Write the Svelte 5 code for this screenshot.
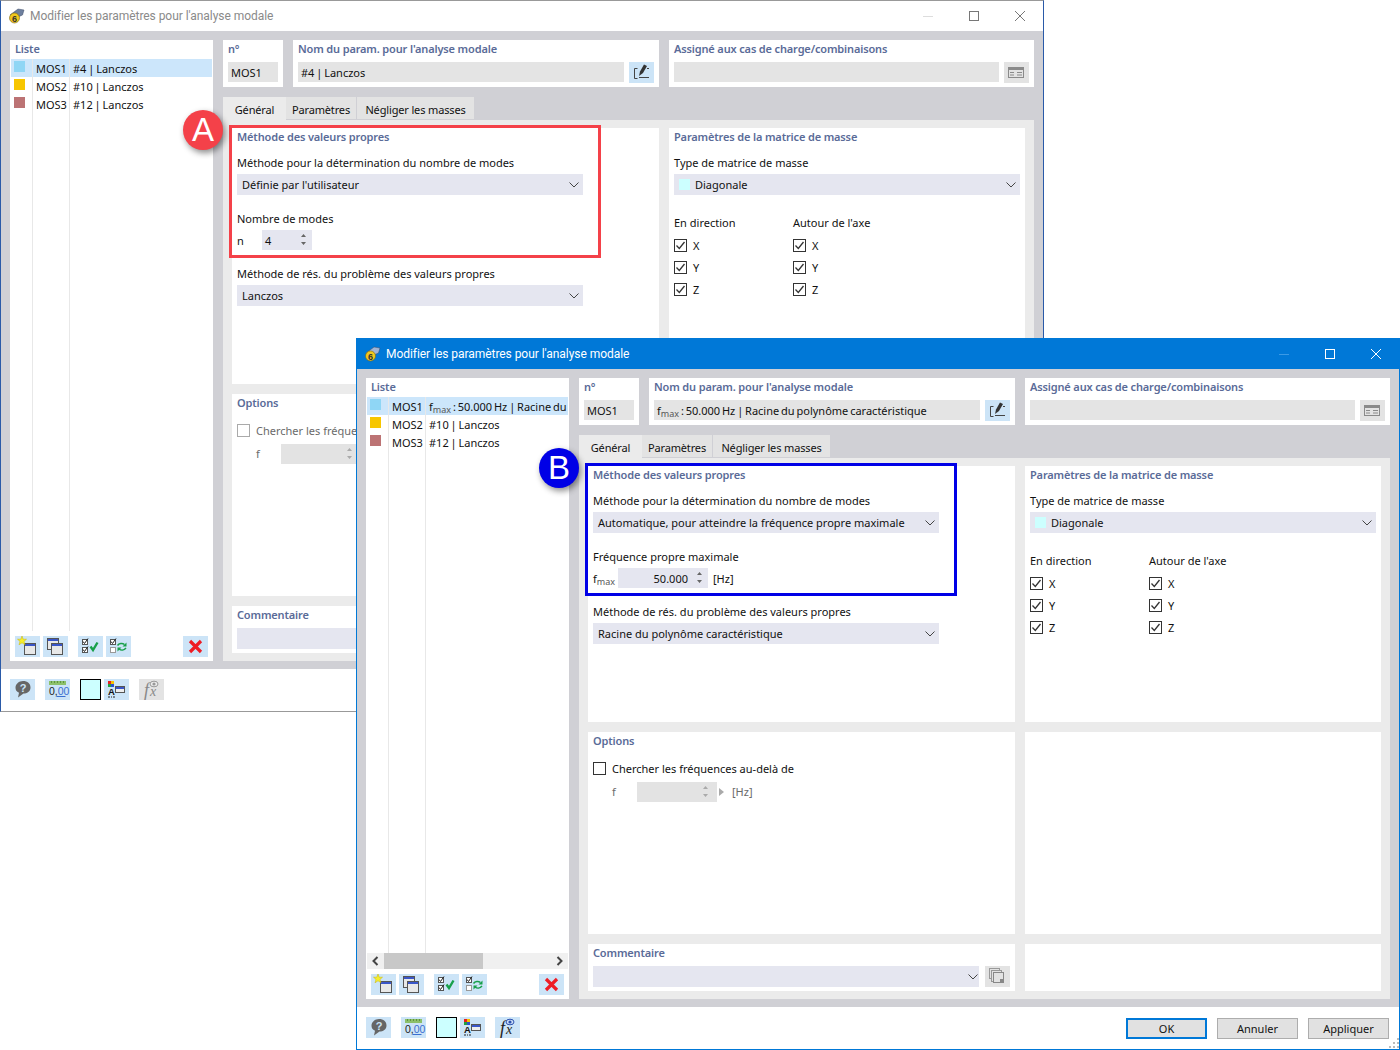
<script>
	// Two copies of the same dialog, the front one focused and in "fmax" mode.
	const swatches = ['#8fd6f5', '#f7c600', '#bc7374'];

	const dialogs = [
		{
			id: 'a',
			focused: false,
			rows: [
				{ name: 'MOS1', desc: '#4 | Lanczos' },
				{ name: 'MOS2', desc: '#10 | Lanczos' },
				{ name: 'MOS3', desc: '#12 | Lanczos' }
			],
			modeMethod: "Définie par l'utilisateur",
			solver: 'Lanczos'
		},
		{
			id: 'b',
			focused: true,
			rows: [
				{ name: 'MOS1', fmax: true, desc: ' : 50.000 Hz | Racine du polynôme caractéristique' },
				{ name: 'MOS2', desc: '#10 | Lanczos' },
				{ name: 'MOS3', desc: '#12 | Lanczos' }
			],
			modeMethod: 'Automatique, pour atteindre la fréquence propre maximale',
			solver: 'Racine du polynôme caractéristique'
		}
	];
</script>

{#snippet fmax()}<span class="fmax">f<sub>max</sub></span>{/snippet}

{#snippet chevron()}
	<svg class="chev" width="10" height="6" viewBox="0 0 10 6"><path d="M.5.5 5 5 9.5.5" fill="none" stroke="#444" /></svg>
{/snippet}

{#snippet spinner()}
	<svg class="spin" width="7" height="13" viewBox="0 0 7 13"><path d="M3.5 1 6 4H1zM3.5 12 1 9h5z" fill="#666" /></svg>
{/snippet}

{#snippet check(label, on = true, dim = false)}
	<span class="check" class:dim>
		<svg width="13" height="13" viewBox="0 0 13 13">
			<rect x=".5" y=".5" width="12" height="12" fill="#fff" stroke={dim ? '#aaa' : '#333'} />
			{#if on}<path d="M2.5 6.5 5.3 9.5 10.5 3" fill="none" stroke="#333" stroke-width="1.3" />{/if}
		</svg>
		{label}
	</span>
{/snippet}

{#snippet win(x, y)}
	<rect x={x + 0.5} y={y + 0.5} width="11" height="11" fill="#e8e8e8" stroke="#555" />
	<rect x={x + 1} y={y + 1} width="10" height="2" fill="#3a56c8" />
{/snippet}

{#snippet icon(name)}
	<svg width="25" height="21" viewBox="0 0 25 21">
		{#if name === 'new'}
			{@render win(9, 7)}
			<path d="M7 0 8.200 3.200 11.500 3.200 9 5.400 10 8.800 7 6.800 4 8.800 5 5.400 2.500 3.200 5.800 3.200z" fill="#f6ee2c" stroke="#c9b400" stroke-width=".5" />
		{:else if name === 'copy'}
			{@render win(4, 2)}
			{@render win(8, 7)}
		{:else if name === 'checks'}
			<rect x="4.5" y="3.5" width="5" height="5" fill="#fff" stroke="#555" />
			<rect x="4.5" y="11.5" width="5" height="5" fill="#fff" stroke="#555" />
			<path d="M5 5.500 6.500 7.500 10 2.500M5 13.500 6.500 15.500 10 10.500" fill="none" stroke="#222" />
			<path d="M12.500 10.500 15 14 19.500 6.500" fill="none" stroke="#18a04a" stroke-width="2.400" />
		{:else if name === 'swap'}
			<rect x="4.5" y="3.5" width="5" height="5" fill="#fff" stroke="#555" />
			<rect x="4.5" y="11.5" width="5" height="5" fill="#fff" stroke="#999" />
			<path d="M5 5.500 6.500 7.500 10 2.500" fill="none" stroke="#222" />
			<path d="M11.500 9.500C13 7 16.500 7 18.500 8.500M20 12C18 14.500 15 14.500 13 13" fill="none" stroke="#18a04a" stroke-width="1.500" />
			<path d="M20.500 6.500v4h-4zM11.500 15.500v-4h4z" fill="#18a04a" />
		{:else if name === 'del'}
			<path d="M7 5 18 16M18 5 7 16" stroke="#ee1c25" stroke-width="3.200" fill="none" />
		{:else if name === 'help'}
			<path d="M13 2C17.500 2 20.500 4.500 20.500 8.500C20.500 12.500 17 14.500 13.500 14.500L8 18.500 9 13.800C6.500 12.800 5.500 10.800 5.500 8.800C5.500 4.800 9 2 13 2Z" fill="#666" />
			<text x="13" y="12.500" class="ico-q">?</text>
		{:else if name === 'decimals'}
			<rect x="4" y="2" width="17" height="4" fill="#8cc06a" />
			<path d="M6.500 2v2M9.500 2v2M12.500 2v2M15.500 2v2M18.500 2v2" stroke="#5f9440" />
			<text x="4" y="15.500" class="ico-num">0,<tspan fill="#3a6fd0">00</tspan></text>
			<path d="M11.500 17.500h9" stroke="#3a6fd0" />
		{:else if name === 'colors'}
			<rect x="4" y="2" width="3" height="3" fill="#e52020" />
			<rect x="7" y="2" width="3" height="3" fill="#f6c200" />
			<rect x="4" y="5" width="3" height="3" fill="#20a040" />
			<rect x="7" y="5" width="3" height="3" fill="#2a50d0" />
			<text x="4" y="16" class="ico-a">A</text>
			<path d="M4 18h2M7 18h1M9 18h2" stroke="#222" />
			<rect x="11.5" y="7.5" width="9" height="6" fill="#eee" stroke="#555" />
			<rect x="12" y="8" width="8" height="2" fill="#3a56c8" />
		{:else if name === 'fx'}
			<text x="5" y="17" class="ico-f">f</text>
			<text x="11" y="17" class="ico-x">x</text>
			<ellipse cx="15" cy="5" rx="4" ry="2.800" fill="#cfe0f7" stroke="#2a50b0" />
			<circle cx="15" cy="5" r="1.600" fill="#2a50b0" />
		{:else if name === 'fx-off'}
			<text x="5" y="17" class="ico-f off">f</text>
			<text x="11" y="17" class="ico-x off">x</text>
			<ellipse cx="15" cy="5" rx="4" ry="2.800" fill="#eee" stroke="#999" />
			<circle cx="15" cy="5" r="1.600" fill="#999" />
		{:else if name === 'edit'}
			<path d="M8.500 6.500H5.500V16.500H8.500M10 15.500H20M18 6.500H20" fill="none" stroke="#444" />
			<path d="M10 14 11 9.500 15 2.500 18 4 14 11Z" fill="#333" />
		{:else if name === 'assign'}
			<rect x="4.5" y="5.500" width="15" height="10" fill="#e3e3e3" stroke="#8a8a8a" />
			<path d="M4 7h16" stroke="#8a8a8a" stroke-width="2" />
			<path d="M6 10.500h4M13 10.500h5M6 13h4M13 13h5" stroke="#8a8a8a" />
		{:else if name === 'stack'}
			<rect x="4.5" y="2.500" width="10" height="10" fill="none" stroke="#999" />
			<rect x="6.5" y="4.500" width="10" height="11" fill="#e3e3e3" stroke="#999" />
			<rect x="8.5" y="6.500" width="10" height="10" fill="#e3e3e3" stroke="#888" />
			<rect x="15" y="13" width="3" height="3" fill="#888" />
		{/if}
	</svg>
{/snippet}

{#snippet dialog(d)}
	<section class="window window-{d.id}" class:focused={d.focused}>
		<header class="titlebar">
			<svg class="app-icon" width="16" height="16" viewBox="0 0 16 16">
				<path d="M1 7 9 1 15 2 13.500 7 9 9Z" fill={d.focused ? '#9fb4d6' : '#6d7f9e'} stroke="#3c4a66" stroke-width=".5" />
				<circle cx="5.500" cy="10" r="5" fill="#f2c91e" stroke="#7a6510" stroke-width=".6" />
				<text x="5.500" y="13.500" class="app-six">6</text>
			</svg>
			<span class="title">Modifier les paramètres pour l'analyse modale</span>
			<div class="controls">
				<span class="ctl ctl-min"></span>
				<span class="ctl ctl-max"></span>
				<svg class="ctl-close" width="10" height="10" viewBox="0 0 10 10"><path d="M0 0 10 10M10 0 0 10" stroke="currentColor" /></svg>
			</div>
		</header>

		<div class="body">
			<aside class="list card">
				<h3 class="heading list-head">Liste</h3>
				<div class="table">
					<div class="col col-swatch">
						{#each d.rows as _, i}
							<div class="cell" class:sel={i === 0}><i class="swatch" style="background:{swatches[i]}"></i></div>
						{/each}
					</div>
					<div class="col col-name">
						{#each d.rows as r, i}
							<div class="cell" class:sel={i === 0}>{r.name}</div>
						{/each}
					</div>
					<div class="col col-desc">
						{#each d.rows as r, i}
							<div class="cell" class:sel={i === 0}>{#if r.fmax}{@render fmax()}{/if}{r.desc}</div>
						{/each}
					</div>
				</div>
				{#if d.focused}
					<div class="scrollbar">
						<svg width="17" height="16" viewBox="0 0 17 16"><path d="M10.500 4 6.500 8 10.500 12" fill="none" stroke="#444" stroke-width="2" /></svg>
						<div class="track"><div class="thumb"></div></div>
						<svg width="17" height="16" viewBox="0 0 17 16"><path d="M6.500 4 10.500 8 6.500 12" fill="none" stroke="#444" stroke-width="2" /></svg>
					</div>
				{/if}
				<div class="list-tools">
					<span class="btn">{@render icon('new')}</span>
					<span class="btn">{@render icon('copy')}</span>
					<span class="btn gap-l">{@render icon('checks')}</span>
					<span class="btn">{@render icon('swap')}</span>
					<span class="btn push">{@render icon('del')}</span>
				</div>
			</aside>

			<div class="main">
				<div class="top">
					<div class="card top-card no">
						<h3 class="heading">n°</h3>
						<div class="field ro">MOS1</div>
					</div>
					<div class="card top-card name">
						<h3 class="heading">Nom du param. pour l'analyse modale</h3>
						<div class="field-row">
							<div class="field ro grow">
								{#if d.focused}{@render fmax()} : 50.000 Hz | Racine du polynôme caractéristique{:else}#4 | Lanczos{/if}
							</div>
							<span class="btn">{@render icon('edit')}</span>
						</div>
					</div>
					<div class="card top-card assigned">
						<h3 class="heading">Assigné aux cas de charge/combinaisons</h3>
						<div class="field-row">
							<div class="field ro grow"></div>
							<span class="btn off">{@render icon('assign')}</span>
						</div>
					</div>
				</div>

				<nav class="tabs">
					<span class="tab active">Général</span>
					<span class="tab t2">Paramètres</span>
					<span class="tab t3">Négliger les masses</span>
				</nav>

				<div class="tab-body">
					<div class="panel pad">
						<h3 class="heading">Méthode des valeurs propres</h3>
						<div class="label first">Méthode pour la détermination du nombre de modes</div>
						<div class="select">{d.modeMethod}{@render chevron()}</div>
						{#if d.focused}
							<div class="label">Fréquence propre maximale</div>
							<div class="num-row">
								{@render fmax()}
								<div class="num wide">50.000 {@render spinner()}</div>
								<span class="unit">[Hz]</span>
							</div>
						{:else}
							<div class="label">Nombre de modes</div>
							<div class="num-row">
								<span>n</span>
								<div class="num short">4 {@render spinner()}</div>
							</div>
						{/if}
						<div class="label">Méthode de rés. du problème des valeurs propres</div>
						<div class="select">{d.solver}{@render chevron()}</div>
					</div>

					<div class="panel pad">
						<h3 class="heading">Paramètres de la matrice de masse</h3>
						<div class="label first">Type de matrice de masse</div>
						<div class="select"><span><i class="mini-swatch"></i>Diagonale</span>{@render chevron()}</div>
						<div class="axes">
							<div class="axis">
								<div class="axis-title">En direction</div>
								{@render check('X')}
								{@render check('Y')}
								{@render check('Z')}
							</div>
							<div class="axis">
								<div class="axis-title">Autour de l'axe</div>
								{@render check('X')}
								{@render check('Y')}
								{@render check('Z')}
							</div>
						</div>
					</div>

					<div class="panel pad">
						<h3 class="heading">Options</h3>
						<div class="opt-row" class:muted={!d.focused}>
							{@render check('Chercher les fréquences au-delà de', false, !d.focused)}
						</div>
						<div class="freq-row">
							<span class="freq-f">f</span>
							<div class="num freq">
								<svg class="spin" width="7" height="13" viewBox="0 0 7 13"><path d="M3.5 1 6 4H1zM3.5 12 1 9h5z" fill="#aaa" /></svg>
							</div>
							<svg class="freq-arrow" width="5" height="8" viewBox="0 0 5 8"><path d="M0 0 5 4 0 8z" fill="#aaa" /></svg>
							<span class="unit">[Hz]</span>
						</div>
					</div>
					<div class="panel"></div>

					<div class="panel pad">
						<h3 class="heading">Commentaire</h3>
						<div class="comment-row">
							<div class="select comment">{@render chevron()}</div>
							<span class="btn off">{@render icon('stack')}</span>
						</div>
					</div>
					<div class="panel"></div>
				</div>
			</div>
		</div>

		<footer class="footer">
			<span class="btn">{@render icon('help')}</span>
			<span class="btn">{@render icon('decimals')}</span>
			<span class="color-box"></span>
			<span class="btn">{@render icon('colors')}</span>
			{#if d.focused}
				<span class="btn">{@render icon('fx')}</span>
			{:else}
				<span class="btn off">{@render icon('fx-off')}</span>
			{/if}
			<div class="actions">
				<button class="action default">OK</button>
				<button class="action">Annuler</button>
				<button class="action">Appliquer</button>
			</div>
		</footer>

		{#if d.focused}
			<svg class="grip" width="10" height="10" viewBox="0 0 10 10">
				<path d="M8 0h2v2H8zM4 4h2v2H4zM8 4h2v2H8zM0 8h2v2H0zM4 8h2v2H4zM8 8h2v2H8z" fill="#bbb" />
			</svg>
		{/if}

		<div class="mark mark-{d.id}"></div>
		<div class="badge badge-{d.id}">{d.id.toUpperCase()}</div>
	</section>
{/snippet}

<div class="desk">
	{#each dialogs as d (d.id)}
		{@render dialog(d)}
	{/each}
</div>

<style>
	:global(body) {
		margin: 0;
		background: #fff;
	}

	.desk {
		position: relative;
		width: 1400px;
		height: 1050px;
		overflow: hidden;
		font-family: 'Noto Sans', sans-serif;
		font-size: 11px;
		color: #111;
	}

	/* ── Window frame ─────────────────────────────────────── */

	.window {
		position: absolute;
		box-sizing: border-box;
		width: 1044px;
		height: 712px;
		display: flex;
		flex-direction: column;
		background: #fff;
		border: 1px solid #2a5aa8;
		border-top-color: #999;
		border-bottom-color: #999;
	}

	.window-a {
		left: 0;
		top: 0;
	}

	.window-b {
		left: 356px;
		top: 338px;
		border-color: #0078d7;
	}

	.titlebar {
		display: flex;
		align-items: center;
		height: 30px;
		flex-shrink: 0;
		padding: 0 18px 0 8px;
		color: #8a8a8a;
	}

	.focused .titlebar {
		background: #0078d7;
		color: #fff;
	}

	.app-icon {
		margin-right: 5px;
	}

	.app-six {
		font: bold 9px 'Liberation Sans', sans-serif;
		text-anchor: middle;
		fill: #333;
	}

	.title {
		font-family: Roboto, sans-serif;
		font-size: 12px;
		letter-spacing: -0.05px;
		line-height: 30px;
		height: 30px;
		flex: 1;
	}

	.controls {
		display: flex;
		align-items: center;
		gap: 36px;
	}

	.ctl {
		display: block;
		box-sizing: border-box;
		width: 10px;
	}

	.ctl-min {
		height: 1px;
		background: #ddd;
	}

	.focused .ctl-min {
		background: #3b9ae6;
	}

	.ctl-max {
		height: 10px;
		border: 1px solid #777;
	}

	.focused .ctl-max {
		border-color: #fff;
	}

	.ctl-close {
		color: #777;
	}

	.focused .ctl-close {
		color: #fff;
	}

	.body {
		flex: 1;
		min-height: 0;
		display: grid;
		grid-template-columns: 203px 811px;
		gap: 10px;
		padding: 9px 9px 8px;
		background: #d0d0d5;
	}

	.card {
		background: #fff;
	}

	.heading {
		margin: 0;
		height: 18px;
		line-height: 18px;
		font-size: 11px;
		font-weight: 600;
		letter-spacing: -0.15px;
		color: #5a6b98;
		white-space: nowrap;
	}

	/* ── List column ──────────────────────────────────────── */

	.list {
		display: flex;
		flex-direction: column;
		min-width: 0;
	}

	.list-head {
		height: 19px;
		padding-left: 5px;
	}

	.table {
		flex: 1;
		min-height: 0;
		display: flex;
		margin: 0 1px;
		overflow: hidden;
	}

	.col-swatch,
	.col-name {
		border-right: 1px solid #e8e8e8;
	}

	.col-swatch {
		width: 21px;
	}

	.col-name {
		width: 36px;
	}

	.col-desc {
		flex: 1;
		min-width: 0;
		word-spacing: -1px;
	}

	.cell {
		height: 18px;
		line-height: 20px;
		padding-left: 3px;
		white-space: nowrap;
		overflow: hidden;
	}

	.cell.sel {
		background: #cce6fb;
	}

	.swatch {
		display: block;
		width: 11px;
		height: 11px;
		position: relative;
		top: 2px;
	}

	.scrollbar {
		display: flex;
		height: 16px;
		margin: 0 1px;
		background: #f0f0f0;
	}

	.track {
		flex: 1;
	}

	.thumb {
		width: 99px;
		height: 100%;
		background: #c8c8c8;
	}

	.list-tools {
		display: flex;
		gap: 3px;
		height: 30px;
		box-sizing: border-box;
		padding: 5px 5px 0;
	}

	.btn {
		display: block;
		width: 25px;
		height: 21px;
		flex-shrink: 0;
		background: #cce4f7;
	}

	.btn svg {
		display: block;
	}

	.btn.off {
		background: #e3e3e3;
	}

	.gap-l {
		margin-left: 7px;
	}

	.push {
		margin-left: auto;
	}

	/* ── Top row ──────────────────────────────────────────── */

	.main {
		display: flex;
		flex-direction: column;
		min-width: 0;
	}

	.top {
		display: grid;
		grid-template-columns: 60px 366px 365px;
		gap: 10px;
		height: 47px;
	}

	.top-card {
		box-sizing: border-box;
		padding: 0 5px;
		height: 47px;
	}

	.top-card .heading {
		height: 18px;
	}

	.top-card .field {
		margin-top: 4px;
	}

	.field-row {
		display: flex;
		gap: 5px;
		margin-top: 4px;
	}

	.field-row .field {
		margin-top: 0;
		word-spacing: -1px;
	}

	.field {
		box-sizing: border-box;
		height: 20px;
		line-height: 22px;
		padding-left: 3px;
		white-space: nowrap;
		overflow: hidden;
	}

	.ro {
		background: #e4e4e4;
	}

	.grow {
		flex: 1;
		min-width: 0;
	}

	.fmax sub {
		font-size: 9px;
		color: #555;
		vertical-align: -2px;
		line-height: 0;
	}

	/* ── Tabs ─────────────────────────────────────────────── */

	.tabs {
		display: flex;
		height: 23px;
		margin-top: 10px;
	}

	.tab {
		box-sizing: border-box;
		height: 22px;
		line-height: 25px;
		background: #e3e3e3;
		text-align: center;
		letter-spacing: -0.15px;
		margin-right: 1px;
	}

	.tab.active {
		width: 63px;
		height: 23px;
		background: #ebebeb;
		margin-right: 0;
	}

	.t2 {
		width: 70px;
	}

	.t3 {
		width: 117px;
		margin-right: 0;
	}

	.tab-body {
		flex: 1;
		min-height: 0;
		display: grid;
		grid-template-columns: 427px 356px;
		grid-template-rows: 256px 202px 47px;
		gap: 10px;
		padding: 8px 9px;
		background: #ebebeb;
	}

	.panel {
		background: #fff;
		min-width: 0;
		overflow: hidden;
	}

	.pad {
		padding: 0 5px;
	}

	.label {
		height: 18px;
		line-height: 18px;
		margin-top: 15px;
		white-space: nowrap;
	}

	.label.first {
		margin-top: 8px;
	}

	.select {
		box-sizing: border-box;
		display: flex;
		align-items: center;
		justify-content: space-between;
		width: 346px;
		height: 21px;
		margin-top: 2px;
		padding: 0 4px 0 5px;
		background: #e5e6f0;
		white-space: nowrap;
	}

	.chev {
		flex-shrink: 0;
	}

	.mini-swatch {
		display: inline-block;
		width: 11px;
		height: 11px;
		margin-right: 5px;
		vertical-align: -1px;
		background: #ccffff;
	}

	.num-row {
		display: flex;
		align-items: center;
		height: 20px;
		margin-top: 2px;
	}

	.num-row > span:first-child {
		width: 25px;
	}

	.num {
		box-sizing: border-box;
		position: relative;
		height: 20px;
		line-height: 22px;
		background: #e5e6f0;
	}

	.spin {
		position: absolute;
		right: 5px;
		top: 3px;
	}

	.num.short {
		width: 50px;
		padding-left: 3px;
	}

	.num.wide {
		width: 90px;
		padding-right: 20px;
		text-align: right;
	}

	.unit {
		margin-left: 5px;
	}

	.axes {
		display: flex;
		margin-top: 19px;
	}

	.axis {
		width: 119px;
	}

	.axis-title {
		height: 18px;
		line-height: 18px;
		margin-bottom: 2px;
	}

	.check {
		display: flex;
		align-items: center;
		gap: 6px;
		height: 22px;
		white-space: nowrap;
	}

	.check svg {
		flex-shrink: 0;
	}

	.check.dim {
		color: #6a6a6a;
	}

	.opt-row {
		margin-top: 7px;
		height: 22px;
	}

	.freq-row {
		display: flex;
		align-items: center;
		margin: 3px 0 0 19px;
		height: 20px;
		color: #6a6a6a;
	}

	.freq-f {
		width: 25px;
		margin-top: -2px;
	}

	.num.freq {
		width: 80px;
		background: #e3e3e3;
	}

	.num.freq .spin {
		right: 8px;
	}

	.freq-arrow {
		margin-left: -2px;
		position: relative;
		left: 4px;
	}

	.freq-row .unit {
		margin-left: 12px;
		margin-top: -2px;
	}

	.comment-row {
		display: flex;
		gap: 6px;
		margin-top: 4px;
	}

	.select.comment {
		width: 386px;
		margin-top: 0;
		justify-content: flex-end;
		padding-right: 1px;
	}

	/* ── Footer ───────────────────────────────────────────── */

	.footer {
		display: flex;
		align-items: flex-start;
		gap: 10px;
		height: 42px;
		flex-shrink: 0;
		box-sizing: border-box;
		padding: 10px 10px 0 9px;
	}

	.color-box {
		box-sizing: border-box;
		width: 21px;
		height: 21px;
		margin-right: -7px;
		background: #ccffff;
		border: 1.5px solid #000;
	}

	.actions {
		display: flex;
		gap: 10px;
		margin-left: auto;
		padding-top: 1px;
	}

	.action {
		box-sizing: border-box;
		width: 81px;
		height: 21px;
		padding: 0;
		background: #e1e1e1;
		border: 1px solid #adadad;
		font: inherit;
		color: inherit;
	}

	.action.default {
		border: 2px solid #0078d7;
	}

	.grip {
		position: absolute;
		right: 0;
		bottom: 1px;
	}

	/* ── Callouts over the dialogs ────────────────────────── */

	.mark {
		position: absolute;
		box-sizing: border-box;
		left: 228px;
		top: 124px;
		width: 372px;
		height: 133px;
		border: 3px solid #f44149;
	}

	.mark-b {
		border-color: #0000e6;
	}

	.badge {
		position: absolute;
		left: 182px;
		top: 109px;
		width: 40px;
		height: 40px;
		border-radius: 50%;
		background: #f44149;
		color: #fff;
		font: 33px/40px 'Liberation Sans', sans-serif;
		text-align: center;
		box-shadow: 2px 3px 6px rgba(0, 0, 0, 0.45);
	}

	.badge-b {
		background: #0000e6;
	}

	/* Small glyphs inside the toolbar icons */
	.ico-q {
		font: bold 11px 'Liberation Sans', sans-serif;
		fill: #cce4f7;
		text-anchor: middle;
	}

	.ico-num {
		font: 10.500px 'Liberation Sans', sans-serif;
		fill: #222;
	}

	.ico-a {
		font: bold 9.500px 'Liberation Sans', sans-serif;
		fill: #111;
	}

	.ico-f {
		font: italic 18px 'Liberation Serif', serif;
		fill: #222;
	}

	.ico-x {
		font: italic 14px 'Liberation Serif', serif;
		fill: #222;
	}

	.ico-f.off,
	.ico-x.off {
		fill: #888;
	}
</style>
